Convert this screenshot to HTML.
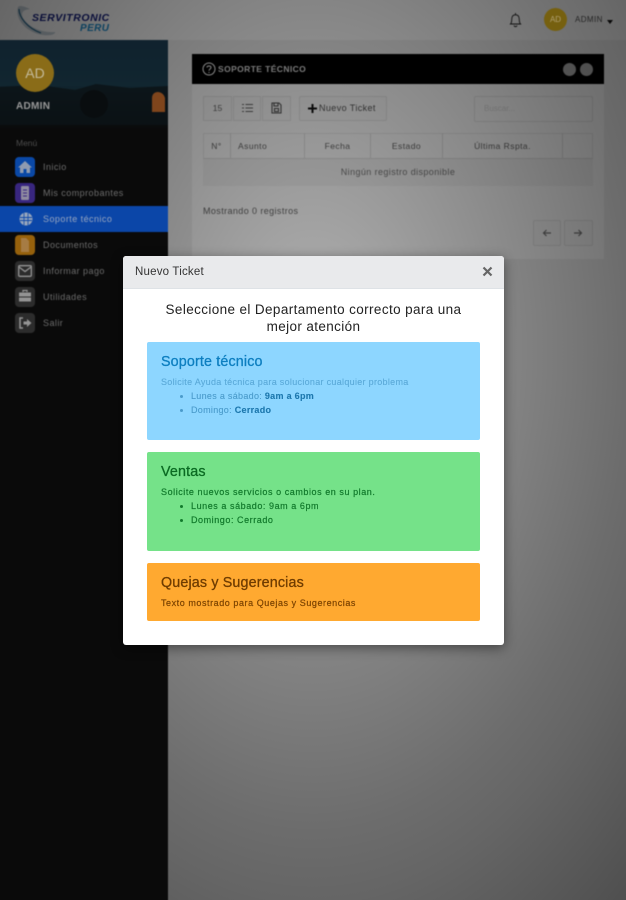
<!DOCTYPE html>
<html lang="es"><head><meta charset="utf-8"><title>Nuevo Ticket</title>
<style>
*{box-sizing:border-box}
html,body{margin:0;padding:0;width:626px;height:900px;overflow:hidden}
body{background:#fff;font-family:"Liberation Sans",sans-serif;color:#333}
#root{position:relative;width:626px;height:900px;overflow:hidden;contain:paint}
.a{position:absolute}
.t{position:absolute;white-space:nowrap}
.wrap{position:absolute;left:0;top:0;width:626px;height:900px;filter:blur(.55px)}
.ic{position:absolute;left:15px;width:20px;height:20px;border-radius:4px}
.ml{position:absolute;left:43px;font-size:9px;letter-spacing:.45px;color:#6c6c6c;white-space:nowrap}
.btn{position:absolute;border:1px solid #e8e8e8;background:#fcfcfc}
.th{position:absolute;top:0;height:26px;border-right:1px solid #e2e2e2;font-size:8.5px;line-height:26px;text-align:center;color:#666;letter-spacing:.45px}
.overlay{position:absolute;left:0;top:0;width:626px;height:900px;background:radial-gradient(ellipse 475px 723px at 313px 350px,rgba(0,0,0,.3) 0%,rgba(0,0,0,.47) 46%,rgba(0,0,0,.55) 66%,rgba(0,0,0,.58) 76%,rgba(0,0,0,.67) 100%)}
.card{position:absolute;left:147px;width:333px;border-radius:2px}
.card h5{position:absolute;left:14px;top:12px;margin:0;font-size:14.3px;font-weight:400;white-space:nowrap;-webkit-text-stroke:.3px currentColor;letter-spacing:.15px}
.card .p{position:absolute;left:14px;font-size:9px;white-space:nowrap;letter-spacing:.3px;-webkit-text-stroke:.1px currentColor}
.card .li{position:absolute;left:44px;font-size:9px;white-space:nowrap;letter-spacing:.3px;-webkit-text-stroke:.1px currentColor}
.card .li:before{content:"";position:absolute;left:-11px;top:4px;width:3px;height:3px;border-radius:50%;background:currentColor}
.w .p,.w .li{letter-spacing:.56px;-webkit-text-stroke:.2px currentColor}
</style></head><body>
<div id="root">

<div class="wrap">
<!-- page -->
<div class="a" style="left:-4px;top:-4px;width:634px;height:44px;background:#fff"></div>
<div class="a" style="left:168px;top:40px;width:462px;height:864px;background:#f1f1f1"></div>

<!-- logo -->
<svg class="a" style="left:14px;top:3px" width="100" height="34" viewBox="0 0 100 34">
<path d="M4 4C1 13 8 26 24 31C36 34 42 31 41 29C28 30 14 24 9 15C7 10 8 7 16 6C10 3 5 2 4 4Z" fill="#c8d4dc"/>
<path d="M5 6C5 14 13 25 27 30" stroke="#1d5f86" stroke-width="1.1" fill="none"/>
<text x="18" y="18" font-family="Liberation Sans" font-size="10.5" font-weight="700" font-style="italic" fill="#141f80" letter-spacing=".55">SERVITRONIC</text>
<text x="66" y="28" font-family="Liberation Sans" font-size="10" font-weight="700" font-style="italic" fill="#1d8fd0" letter-spacing=".4">PERU</text>
</svg>

<!-- top right -->
<svg class="a" style="left:508px;top:12px" width="15" height="16" viewBox="0 0 15 16" fill="none" stroke="#222" stroke-width=".9">
<path d="M2.5 12C4 10.5 3.6 8 3.8 6.5C4 4 5.5 2.8 7.5 2.8S11 4 11.2 6.5C11.4 8 11 10.5 12.5 12Z"/><path d="M6 13.5C6.5 15 8.5 15 9 13.5" /><path d="M7.5 1V2.5"/>
</svg>
<div class="t" style="left:575px;top:15px;font-size:8px;color:#555;letter-spacing:.4px">ADMIN</div>
<div class="a" style="left:607px;top:20px;border:3.5px solid transparent;border-top:4px solid #111;border-bottom:0"></div>

<!-- panel -->
<div class="a" style="left:192px;top:54px;width:412px;height:205px;background:#fff"></div>
<div class="a" style="left:192px;top:54px;width:412px;height:30px;background:#000"></div>
<svg class="a" style="left:202px;top:62px" width="14" height="14" viewBox="0 0 14 14" fill="none" stroke="#fff" stroke-width="1"><circle cx="7" cy="7" r="6"/><path d="M5 5.5C5 3.5 9 3.5 9 5.5C9 7 7 7 7 8.7" /><path d="M7 10V11"/></svg>
<div class="t" style="left:218px;top:64px;font-size:8.5px;font-weight:700;color:#ddd;letter-spacing:.4px">SOPORTE TÉCNICO</div>
<div class="a" style="left:563px;top:63px;width:13px;height:13px;border-radius:50%;background:#b4b4b4"></div>
<div class="a" style="left:580px;top:63px;width:13px;height:13px;border-radius:50%;background:#b4b4b4"></div>

<div class="btn" style="left:203px;top:96px;width:29px;height:25px;font-size:8.5px;line-height:23px;text-align:center;color:#666">15</div>
<div class="btn" style="left:233px;top:96px;width:28px;height:25px"></div>
<svg class="a" style="left:242px;top:103px" width="11" height="10" viewBox="0 0 11 10" stroke="#666" stroke-width="1"><path d="M3.5 1.5H11M3.5 5H11M3.5 8.5H11M0 1.5H2M0 5H2M0 8.5H2"/></svg>
<div class="btn" style="left:262px;top:96px;width:29px;height:25px"></div>
<svg class="a" style="left:271px;top:102px" width="11" height="12" viewBox="0 0 11 12" fill="none" stroke="#555" stroke-width="1.1"><path d="M1 1H8L10 3V11H1Z"/><rect x="3" y="1" width="4" height="3"/><rect x="3.5" y="6.5" width="4" height="3"/></svg>
<div class="btn" style="left:299px;top:96px;width:88px;height:25px;border-radius:2px"></div>
<svg class="a" style="left:308px;top:104px" width="9" height="9" viewBox="0 0 9 9"><path d="M3.5 0H5.5V3.5H9V5.5H5.5V9H3.5V5.5H0V3.5H3.5Z" fill="#111"/></svg>
<div class="t" style="left:319px;top:103px;font-size:9px;color:#555;letter-spacing:.4px">Nuevo Ticket</div>
<div class="a" style="left:474px;top:96px;width:119px;height:26px;border:1px solid #e8e8e8;border-radius:2px;background:#fff"></div>
<div class="t" style="left:484px;top:104px;font-size:8px;color:#ddd">Buscar...</div>

<div class="a" style="left:203px;top:133px;width:390px;height:26px;border:1px solid #ececec;border-bottom:1px solid #e0e0e0"></div>
<div class="a" style="left:203px;top:133px;width:390px;height:26px">
<div class="th" style="left:0;width:28px">N°</div>
<div class="th" style="left:28px;width:74px;text-align:left;padding-left:7px">Asunto</div>
<div class="th" style="left:102px;width:66px">Fecha</div>
<div class="th" style="left:168px;width:72px">Estado</div>
<div class="th" style="left:240px;width:120px">Última Rspta.</div>
</div>
<div class="a" style="left:203px;top:159px;width:390px;height:27px;background:#f5f5f5;font-size:9px;line-height:27px;text-align:center;color:#777;letter-spacing:.4px">Ningún registro disponible</div>
<div class="t" style="left:203px;top:206px;font-size:9px;color:#666;letter-spacing:.4px">Mostrando 0 registros</div>
<div class="btn" style="left:533px;top:220px;width:28px;height:26px;border-radius:2px"></div>
<div class="btn" style="left:564px;top:220px;width:29px;height:26px;border-radius:2px"></div>
<svg class="a" style="left:542px;top:228px" width="10" height="10" viewBox="0 0 10 10" fill="none" stroke="#777" stroke-width="1.2"><path d="M9 5H1.5M4.5 2L1.5 5L4.5 8"/></svg>
<svg class="a" style="left:573px;top:228px" width="10" height="10" viewBox="0 0 10 10" fill="none" stroke="#777" stroke-width="1.2"><path d="M1 5H8.5M5.5 2L8.5 5L5.5 8"/></svg>
</div>

<div class="overlay"></div>

<div class="wrap">
<!-- top right avatar -->
<div class="a" style="left:544px;top:8px;width:23px;height:23px;border-radius:50%;background:#76600f"></div>
<div class="t" style="left:544px;top:8px;width:23px;text-align:center;line-height:23px;font-size:8px;color:#b0a070">AD</div>

<!-- sidebar -->
<div class="a" style="left:-4px;top:40px;width:172px;height:864px;background:#0a0a0a"></div>
<div class="a" style="left:-4px;top:40px;width:172px;height:90px;background:linear-gradient(180deg,#10222e 0%,#112630 50%,#0d1619 75%,#0a0a0a 100%)"></div>
<svg class="a" style="left:-4px;top:80px" width="172" height="45" viewBox="0 0 172 45">
<path d="M0 7L44 5L79 10L100 4L134 8L172 6V45H0Z" fill="#0c1316" opacity=".85"/>
<circle cx="98" cy="24" r="14" fill="#090d0f"/>
<path d="M156 18C156 10 167 10 169 18V32H156Z" fill="#7f451c"/>
</svg>
<div class="a" style="left:16px;top:54px;width:38px;height:38px;border-radius:50%;background:#8a6c18"></div>
<div class="t" style="left:16px;top:54px;width:38px;text-align:center;line-height:38px;font-size:14px;color:#c4bb9c">AD</div>
<div class="t" style="left:16px;top:101px;font-size:10px;font-weight:700;color:#999;letter-spacing:.3px">ADMIN</div>
<div class="t" style="left:16px;top:138px;font-size:8.5px;color:#4c4c4c">Menú</div>

<div class="a" style="left:-4px;top:206px;width:172px;height:26px;background:#0b46a8"></div>

<div class="ic" style="top:157px;background:#0a48a6"></div>
<svg class="a" style="left:18px;top:160px" width="14" height="14" viewBox="0 0 14 14"><path d="M7 1L0 7.5H2V13H5.5V9H8.5V13H12V7.5H14Z" fill="#8f9bb0"/></svg>
<div class="ic" style="top:183px;background:#38267f"></div>
<svg class="a" style="left:20px;top:186px" width="10" height="14" viewBox="0 0 10 14"><rect x="1" width="8" height="14" rx="1" fill="#8f8ba0"/><path d="M3 4H7M3 7H7M3 10H7" stroke="#38267f" stroke-width="1"/></svg>
<svg class="a" style="left:19px;top:212px" width="14" height="14" viewBox="0 0 14 14"><circle cx="7" cy="7" r="6.5" fill="#98a6bc"/><path d="M1 5.5H13M1 8.5H13" stroke="#0b46a8" stroke-width="1"/><path d="M5 1V13M9 1V13" stroke="#0b46a8" stroke-width=".8"/></svg>
<div class="ic" style="top:235px;background:#96610c"></div>
<svg class="a" style="left:20px;top:238px" width="10" height="14" viewBox="0 0 10 14"><path d="M1 0H6L9 3V14H1Z" fill="#a67c44"/></svg>
<div class="ic" style="top:261px;background:#2c2c2c"></div>
<svg class="a" style="left:18px;top:265px" width="14" height="12" viewBox="0 0 14 12"><rect x=".7" y=".7" width="12.6" height="10.6" rx="1" fill="none" stroke="#949494" stroke-width="1.3"/><path d="M1 2L7 6.5L13 2" fill="none" stroke="#949494" stroke-width="1.3"/></svg>
<div class="ic" style="top:287px;background:#2c2c2c"></div>
<svg class="a" style="left:18px;top:289px" width="14" height="14" viewBox="0 0 14 14"><path d="M5 3V1.5H9V3" fill="none" stroke="#949494" stroke-width="1.3"/><rect x="1" y="3.5" width="12" height="4" fill="#949494"/><rect x="1" y="8.5" width="12" height="4" fill="#949494"/></svg>
<div class="ic" style="top:313px;background:#2c2c2c"></div>
<svg class="a" style="left:18px;top:316px" width="14" height="14" viewBox="0 0 14 14"><path d="M5 2H2V12H5" fill="none" stroke="#949494" stroke-width="1.5"/><path d="M5.5 5.5H9V3L13.5 7L9 11V8.5H5.5Z" fill="#949494"/></svg>

<div class="ml" style="top:162px">Inicio</div>
<div class="ml" style="top:188px">Mis comprobantes</div>
<div class="ml" style="top:214px;color:#98a6c0">Soporte técnico</div>
<div class="ml" style="top:240px">Documentos</div>
<div class="ml" style="top:266px">Informar pago</div>
<div class="ml" style="top:292px">Utilidades</div>
<div class="ml" style="top:318px">Salir</div>
</div>

<!-- modal -->
<div class="a" style="left:123px;top:256px;width:381px;height:389px;background:#fff;border-radius:3px;box-shadow:0 3px 12px rgba(0,0,0,.45)"></div>
<div class="a" style="left:123px;top:256px;width:381px;height:33px;background:#e9eaec;border-radius:3px 3px 0 0;border-bottom:1px solid #dee2e6"></div>
<div style="position:absolute;left:0;top:0;width:626px;height:900px;filter:blur(.3px)">
<div class="t" style="left:135px;top:266px;font-size:11.5px;color:#333;letter-spacing:.2px">Nuevo Ticket</div>
<svg class="a" style="left:482px;top:266px" width="11" height="11" viewBox="0 0 11 11"><path d="M1.5 1.5L9.5 9.5M9.5 1.5L1.5 9.5" stroke="#666" stroke-width="2.2"/></svg>
<div class="a" style="left:147px;top:301px;width:333px;text-align:center;font-size:13.5px;line-height:17px;color:#222;letter-spacing:.38px">Seleccione el Departamento correcto para una<br>mejor atención</div>

<div class="card" style="top:342px;height:98px;background:#8dd6ff;color:#2d8fc8">
<h5 style="color:#0d7fc0">Soporte técnico</h5>
<div class="p" style="top:35px;color:#5aa9d8">Solicite Ayuda técnica para solucionar cualquier problema</div>
<div class="li" style="top:49px;color:#4a9bcb">Lunes a sábado: <b style="color:#1c77ad">9am a 6pm</b></div>
<div class="li" style="top:63px;color:#4a9bcb">Domingo: <b style="color:#1c77ad">Cerrado</b></div>
</div>

<div class="card w" style="top:452px;height:99px;background:#75e289;color:#127a2c">
<h5 style="color:#0b6b23">Ventas</h5>
<div class="p" style="top:35px">Solicite nuevos servicios o cambios en su plan.</div>
<div class="li" style="top:49px">Lunes a sábado: 9am a 6pm</div>
<div class="li" style="top:63px">Domingo: Cerrado</div>
</div>

<div class="card w" style="top:563px;height:58px;background:#ffa930;color:#7c4300">
<h5 style="color:#6f3c00">Quejas y Sugerencias</h5>
<div class="p" style="top:35px">Texto mostrado para Quejas y Sugerencias</div>
</div>
</div>

</div>
</body></html>
